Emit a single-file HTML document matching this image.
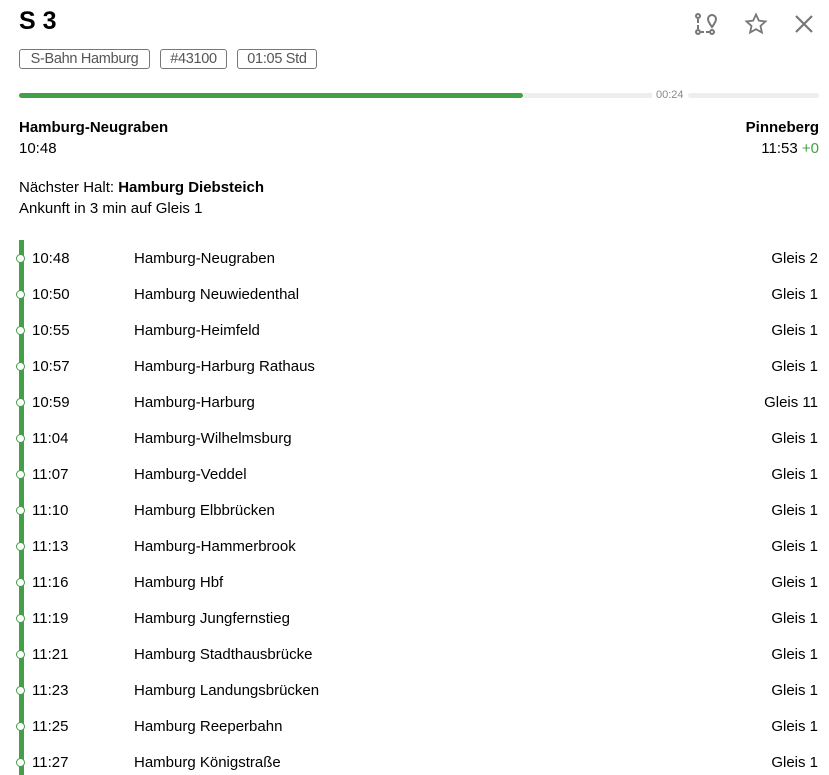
<!DOCTYPE html>
<html><head><meta charset="utf-8"><style>
body{margin:0;background:#fff;font-family:"Liberation Sans",sans-serif;color:#000;width:829px;height:775px;overflow:hidden;position:relative}
.a{position:absolute}
.tag{position:absolute;top:49px;height:20px;border:1px solid #777;border-radius:3px;font-size:14.5px;color:#555;line-height:18px;text-align:center;box-sizing:border-box;white-space:nowrap;letter-spacing:-0.3px}
.row{position:absolute;left:0;width:829px;height:20px;font-size:15px;line-height:20px}
.row .t{position:absolute;left:32px}
.row .n{position:absolute;left:134px}
.row .g{position:absolute;right:11px}
.dot{position:absolute;left:16px;top:5px;width:7px;height:7px;border:1.5px solid #43a047;border-radius:50%;background:#fff}
</style></head><body>
<div class="a" style="left:19px;top:7px;font-size:25px;font-weight:bold">S 3</div>
<div class="tag" style="left:19px;width:131px">S-Bahn Hamburg</div>
<div class="tag" style="left:160px;width:67px">#43100</div>
<div class="tag" style="left:237px;width:80px">01:05 Std</div>
<svg class="a" style="left:694px;top:12px" width="24" height="24" viewBox="0 0 24 24" fill="none" stroke="#777" stroke-width="2"><circle cx="4" cy="4" r="2"/><circle cx="4" cy="20" r="2"/><circle cx="18" cy="20" r="2"/><path d="M4 7v4M4 13v4M7 20h3M12 20h3"/><path d="M18 15c-3-4-4-6-4-8a4 4 0 018 0c0 2-1 4-4 8z"/></svg>
<svg class="a" style="left:744px;top:12px" width="24" height="24" viewBox="0 0 24 24" fill="none" stroke="#777" stroke-width="1.8"><path d="M12 2.5l2.9 6.2 6.6.7-5 4.5 1.4 6.6L12 17.2l-5.9 3.3 1.4-6.6-5-4.5 6.6-.7z"/></svg>
<svg class="a" style="left:794px;top:14px" width="20" height="20" viewBox="0 0 20 20" stroke="#777" stroke-width="2.2"><path d="M2 2l16 16M18 2L2 18"/></svg>
<div class="a" style="left:19px;top:93px;width:504px;height:5px;background:#43a047;border-radius:3px"></div>
<div class="a" style="left:523px;top:93px;width:129px;height:5px;background:#eee"></div>
<div class="a" style="left:656px;top:89px;font-size:11px;color:#888">00:24</div>
<div class="a" style="left:688px;top:93px;width:131px;height:5px;background:#eee;border-radius:3px"></div>
<div class="a" style="left:19px;top:119px;font-size:15px;font-weight:bold">Hamburg-Neugraben</div>
<div class="a" style="left:19px;top:140px;font-size:15px">10:48</div>
<div class="a" style="right:10px;top:119px;font-size:15px;font-weight:bold">Pinneberg</div>
<div class="a" style="right:10px;top:140px;font-size:15px">11:53 <span style="color:#43a047">+0</span></div>
<div class="a" style="left:19px;top:179px;font-size:15px">Nächster Halt: <b>Hamburg Diebsteich</b></div>
<div class="a" style="left:19px;top:200px;font-size:15px">Ankunft in 3 min auf Gleis 1</div>
<div class="a" style="left:19px;top:240px;width:5px;height:535px;background:#43a047"></div>
<div class="row" style="top:249px"><div class="dot"></div><span class="t">10:48</span><span class="n">Hamburg-Neugraben</span><span class="g">Gleis 2</span></div>
<div class="row" style="top:285px"><div class="dot"></div><span class="t">10:50</span><span class="n">Hamburg Neuwiedenthal</span><span class="g">Gleis 1</span></div>
<div class="row" style="top:321px"><div class="dot"></div><span class="t">10:55</span><span class="n">Hamburg-Heimfeld</span><span class="g">Gleis 1</span></div>
<div class="row" style="top:357px"><div class="dot"></div><span class="t">10:57</span><span class="n">Hamburg-Harburg Rathaus</span><span class="g">Gleis 1</span></div>
<div class="row" style="top:393px"><div class="dot"></div><span class="t">10:59</span><span class="n">Hamburg-Harburg</span><span class="g">Gleis 11</span></div>
<div class="row" style="top:429px"><div class="dot"></div><span class="t">11:04</span><span class="n">Hamburg-Wilhelmsburg</span><span class="g">Gleis 1</span></div>
<div class="row" style="top:465px"><div class="dot"></div><span class="t">11:07</span><span class="n">Hamburg-Veddel</span><span class="g">Gleis 1</span></div>
<div class="row" style="top:501px"><div class="dot"></div><span class="t">11:10</span><span class="n">Hamburg Elbbrücken</span><span class="g">Gleis 1</span></div>
<div class="row" style="top:537px"><div class="dot"></div><span class="t">11:13</span><span class="n">Hamburg-Hammerbrook</span><span class="g">Gleis 1</span></div>
<div class="row" style="top:573px"><div class="dot"></div><span class="t">11:16</span><span class="n">Hamburg Hbf</span><span class="g">Gleis 1</span></div>
<div class="row" style="top:609px"><div class="dot"></div><span class="t">11:19</span><span class="n">Hamburg Jungfernstieg</span><span class="g">Gleis 1</span></div>
<div class="row" style="top:645px"><div class="dot"></div><span class="t">11:21</span><span class="n">Hamburg Stadthausbrücke</span><span class="g">Gleis 1</span></div>
<div class="row" style="top:681px"><div class="dot"></div><span class="t">11:23</span><span class="n">Hamburg Landungsbrücken</span><span class="g">Gleis 1</span></div>
<div class="row" style="top:717px"><div class="dot"></div><span class="t">11:25</span><span class="n">Hamburg Reeperbahn</span><span class="g">Gleis 1</span></div>
<div class="row" style="top:753px"><div class="dot"></div><span class="t">11:27</span><span class="n">Hamburg Königstraße</span><span class="g">Gleis 1</span></div>
</body></html>
